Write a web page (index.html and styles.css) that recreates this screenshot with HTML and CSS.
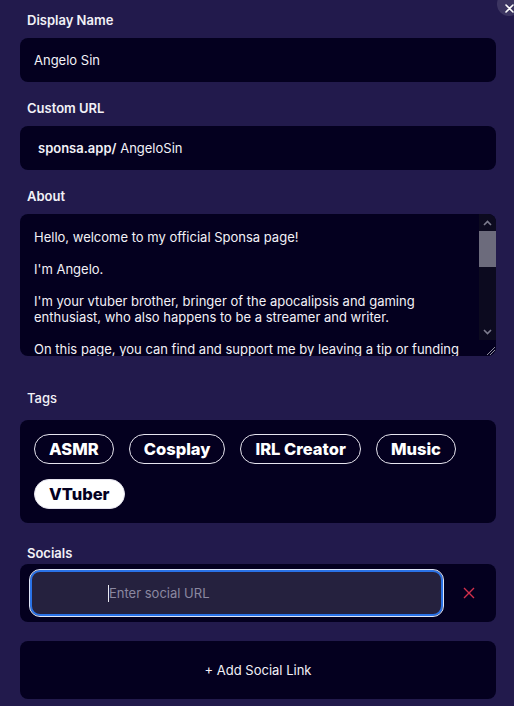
FILE: index.html
```html
<!DOCTYPE html>
<html lang="en">
<head>
    <meta charset="UTF-8">
    <meta name="viewport" content="width=device-width, initial-scale=1.0">
    <title>Edit Profile</title>
    <link rel="stylesheet" href="styles.css">
</head>
<body>
    <button class="close-btn" aria-label="Close">
        <svg width="9" height="9" viewBox="0 0 9 9"><path d="M1 1L8 8M8 1L1 8" stroke="#fff" stroke-width="1.6" stroke-linecap="round"/></svg>
    </button>

    <div class="field">
        <label class="field-label">Display Name</label>
        <div class="box text-box">Angelo Sin</div>
    </div>

    <div class="field">
        <label class="field-label">Custom URL</label>
        <div class="box text-box url-box"><b>sponsa.app/</b>&nbsp;AngeloSin</div>
    </div>

    <div class="field about-field">
        <label class="field-label">About</label>
        <div class="box about-box">
            <div class="about-text">Hello, welcome to my official Sponsa page!

I'm Angelo.

I'm your vtuber brother, bringer of the apocalipsis and gaming enthusiast, who also happens to be a streamer and writer.

On this page, you can find and support me by leaving a tip or funding my goals.</div>
            <div class="scrollbar">
                <div class="sb-arrow">
                    <svg width="9" height="6" viewBox="0 0 9 6"><path d="M1 5L4.5 1.5L8 5" fill="none" stroke="#7d7c8e" stroke-width="1.6"/></svg>
                </div>
                <div class="sb-thumb"></div>
                <div class="sb-track"></div>
                <div class="sb-arrow">
                    <svg width="9" height="6" viewBox="0 0 9 6"><path d="M1 1L4.5 4.5L8 1" fill="none" stroke="#7d7c8e" stroke-width="1.6"/></svg>
                </div>
                <div class="sb-corner">
                    <svg width="12" height="12" viewBox="0 0 12 12"><path d="M11 3L3 11M11 6L6 11M11 9L9 11" stroke="#8d8c9c" stroke-width="1"/></svg>
                </div>
            </div>
        </div>
    </div>

    <div class="field tags-field">
        <label class="field-label light">Tags</label>
        <div class="box tags-box">
            <span class="tag">ASMR</span>
            <span class="tag">Cosplay</span>
            <span class="tag">IRL Creator</span>
            <span class="tag">Music</span>
            <span class="tag selected">VTuber</span>
        </div>
    </div>

    <div class="field socials-field">
        <label class="field-label">Socials</label>
        <div class="box social-row">
            <div class="social-input"><span class="caret"></span><span class="placeholder">Enter social URL</span></div>
            <svg class="remove" width="12" height="12" viewBox="0 0 12 12"><path d="M1 1L11 11M11 1L1 11" stroke="#d3304c" stroke-width="1.4"/></svg>
        </div>
    </div>

    <div class="box add-social">+ Add Social Link</div>
</body>
</html>
```

FILE: styles.css
```css
:root {
    --page-bg: #221a4c;
    --box-bg: #04001f;
    --text: #f2f1f7;
}

body {
    margin: 0;
    padding: 12px 18px 0 20px;
    background: var(--page-bg);
    color: var(--text);
    font-family: 'Inter', 'Noto Sans', sans-serif;
    font-size: 13px;
    position: relative;
    overflow: hidden;
    height: 706px;
    box-sizing: border-box;
}

.close-btn {
    position: absolute;
    top: -8px;
    left: 497px;
    width: 24px;
    height: 24px;
    border-radius: 50%;
    border: none;
    padding: 0;
    background: rgba(255, 255, 255, 0.12);
    display: flex;
    align-items: center;
    justify-content: center;
    padding-top: 8px;
}

.field {
    margin-bottom: 18px;
}

.field-label {
    display: block;
    margin: 0 0 10px 7px;
    font-weight: 600;
    font-size: 13px;
    line-height: 16px;
}

.field-label.light {
    font-weight: 500;
}

.box {
    background: var(--box-bg);
    border-radius: 8px;
    box-sizing: border-box;
}

.text-box {
    height: 44px;
    padding: 0 14px;
    display: flex;
    align-items: center;
    font-size: 13px;
}

.url-box {
    padding-left: 18px;
}

.url-box b {
    font-weight: 600;
}

.about-field {
    margin-bottom: 34px;
}

/* about box with a drawn scrollbar */
.about-box {
    display: flex;
    height: 142px;
    overflow: hidden;
}

.about-text {
    flex: 1;
    white-space: pre-wrap;
    font-size: 13px;
    line-height: 16px;
    padding: 15px 10px 0 14px;
    overflow: hidden;
}

.scrollbar {
    width: 17px;
    display: flex;
    flex-direction: column;
}

.sb-arrow {
    height: 17px;
    background: #0c0a1f;
    display: flex;
    align-items: center;
    justify-content: center;
}

.sb-thumb {
    height: 36px;
    background: #6c6b7c;
}

.sb-track {
    flex: 1;
    background: #0c0a1f;
}

.sb-corner {
    height: 16px;
    display: flex;
    align-items: flex-end;
    justify-content: flex-end;
}

.tags-field .field-label {
    margin-bottom: 14px;
}

.tags-field {
    margin-bottom: 22px;
}

.tags-box {
    display: flex;
    flex-wrap: wrap;
    gap: 15px 15px;
    padding: 14px 14px;
}

.tag {
    height: 30px;
    box-sizing: border-box;
    padding: 0 14px;
    border: 1px solid #e6e4ee;
    border-radius: 16px;
    display: flex;
    align-items: center;
    font-weight: 800;
    font-size: 16.5px;
    color: #fff;
}

.tag.selected {
    background: #fff;
    color: var(--box-bg);
}

.socials-field {
    margin-bottom: 19px;
}

.socials-field .field-label {
    margin-bottom: 3px;
}

.social-row {
    height: 58px;
    display: flex;
    align-items: center;
    padding: 0 9px;
}

.social-input {
    flex: none;
    width: 415px;
    height: 48px;
    box-sizing: border-box;
    border: 1px solid #dfe5f6;
    box-shadow: inset 0 0 0 2px #2a72e6;
    border-radius: 11px;
    background: #25213e;
    display: flex;
    align-items: center;
    padding-left: 78px;
}

.caret {
    width: 1px;
    height: 17px;
    background: #e8e8f0;
}

.placeholder {
    color: #8b88a0;
    font-size: 13px;
}

.remove {
    margin-left: 19px;
}

.add-social {
    height: 58px;
    display: flex;
    align-items: center;
    justify-content: center;
    font-size: 13px;
}
```
